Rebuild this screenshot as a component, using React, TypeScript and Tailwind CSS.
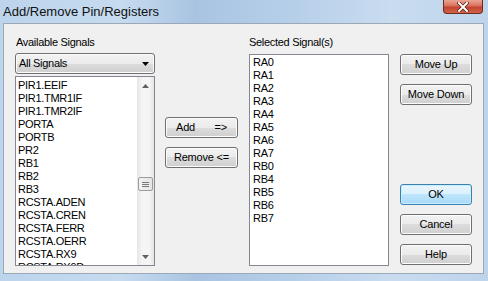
import React from "react";

const available = [
  "PIR1.EEIF",
  "PIR1.TMR1IF",
  "PIR1.TMR2IF",
  "PORTA",
  "PORTB",
  "PR2",
  "RB1",
  "RB2",
  "RB3",
  "RCSTA.ADEN",
  "RCSTA.CREN",
  "RCSTA.FERR",
  "RCSTA.OERR",
  "RCSTA.RX9",
  "RCSTA.RX9D",
];

const selected = ["RA0", "RA1", "RA2", "RA3", "RA4", "RA5", "RA6", "RA7", "RB0", "RB4", "RB5", "RB6", "RB7"];

const btn =
  "h-[21px] w-[72px] rounded-[3px] border border-[#707070] bg-[linear-gradient(#f2f2f2_0%,#ebebeb_50%,#dddddd_50%,#cfcfcf_100%)] shadow-[inset_0_0_0_1px_#fcfcfc] text-[11px] leading-[13px] tracking-[-0.2px] text-black flex items-center justify-center";

const WinButton = ({ label, primary }: { label: string; primary?: boolean }) => (
  <button
    className={
      primary
        ? "h-[21px] w-[72px] rounded-[3px] border border-[#3c7fb1] bg-[linear-gradient(#eaf6fd_0%,#d9f0fc_50%,#bee6fd_50%,#a7d9f5_100%)] shadow-[inset_0_0_0_1px_#c5f0ff] text-[11px] leading-[13px] text-black flex items-center justify-center"
        : btn
    }
  >
    {label}
  </button>
);

const ScrollBar = () => (
  <div className="w-[17px] h-full flex flex-col bg-[linear-gradient(90deg,#e6e6e6,#f5f5f5_30%,#f5f5f5_70%,#e6e6e6)]">
    <div className="h-[17px] flex items-center justify-center">
      <svg width="7" height="4" viewBox="0 0 7 4">
        <path d="M0 4 L3.5 0 L7 4 Z" fill="#606060" />
      </svg>
    </div>
    <div className="flex-1 flex flex-col">
      <div className="h-[83px]" />
      <div className="mx-[1px] h-[14px] rounded-[2px] border border-[#9b9b9b] bg-[linear-gradient(90deg,#f3f3f3,#e4e4e4)] flex flex-col items-center justify-center gap-[1px]">
        <div className="w-[7px] h-[1px] bg-[#7a7a7a]" />
        <div className="w-[7px] h-[1px] bg-[#7a7a7a]" />
        <div className="w-[7px] h-[1px] bg-[#7a7a7a]" />
      </div>
    </div>
    <div className="h-[17px] flex items-center justify-center">
      <svg width="7" height="4" viewBox="0 0 7 4">
        <path d="M0 0 L3.5 4 L7 0 Z" fill="#606060" />
      </svg>
    </div>
  </div>
);

export default function App() {
  return (
    <div
      className="w-[488px] h-[281px] flex flex-col bg-[linear-gradient(90deg,#bcd4ec_0%,#c6dbef_25%,#a9c4e2_40%,#b6cfe9_60%,#c9dcf0_80%,#bed4eb_100%)] overflow-hidden"
      style={{ fontFamily: '"Liberation Sans", Arial, sans-serif' }}
    >
      {/* title bar */}
      <div className="h-[23px] flex items-start justify-between pl-[3px] pr-[5px]">
        <span className="mt-[4px] text-[13px] leading-[15px] text-[#111]">Add/Remove Pin/Registers</span>
        <div className="w-[40px] h-[14px] rounded-b-[4px] border border-t-0 border-[#6e2b20] bg-[linear-gradient(#e9a493_0%,#d7715d_45%,#c4432f_55%,#d0644a_100%)] flex items-center justify-center">
          <svg width="12" height="10" viewBox="0 0 12 10">
            <path d="M2 1 L10 9 M10 1 L2 9" stroke="#5a2018" strokeWidth="3.4" strokeLinecap="square" />
            <path d="M2 1 L10 9 M10 1 L2 9" stroke="#ffffff" strokeWidth="2" strokeLinecap="square" />
          </svg>
        </div>
      </div>

      {/* client */}
      <div className="flex-1 flex pl-[3px] pr-[4px] pb-[7px]">
        <div className="flex-1 border border-[#9aa8b8] bg-[#f0f0f0] flex pl-[11px] pr-[11px] pt-[12px] pb-[7px] tracking-[-0.3px]">
          {/* available */}
          <div className="w-[140px] flex flex-col">
            <div className="text-[11px] leading-[13px] text-black pl-[1px]">Available Signals</div>
            <div className="mt-[4px] h-[21px] rounded-[3px] border border-[#707070] bg-[linear-gradient(#f2f2f2_0%,#ebebeb_50%,#dddddd_50%,#cfcfcf_100%)] shadow-[inset_0_0_0_1px_#fcfcfc] flex items-center justify-between pl-[3px] pr-[5px]">
              <span className="text-[11px] leading-[13px] text-black">All Signals</span>
              <svg width="7" height="4" viewBox="0 0 7 4">
                <path d="M0 0 L3.5 4 L7 0 Z" fill="#000" />
              </svg>
            </div>
            <div className="mt-[2px] h-[190px] border border-[#828790] bg-white flex overflow-hidden">
              <div className="flex-1 pl-[2px] pt-[2px] overflow-hidden">
                {available.map((s) => (
                  <div key={s} className="text-[11px] leading-[13px] text-black whitespace-nowrap">
                    {s}
                  </div>
                ))}
              </div>
              <ScrollBar />
            </div>
          </div>

          {/* add / remove */}
          <div className="ml-[10px] w-[73px] flex flex-col pt-[81px] gap-[9px]">
            <button className={btn + " !w-[73px] !justify-between px-[10px]"}>
              <span>Add</span>
              <span>=&gt;</span>
            </button>
            <button className={btn + " !w-[73px]"}>Remove &lt;=</button>
          </div>

          {/* selected */}
          <div className="ml-[11px] w-[140px] flex flex-col">
            <div className="text-[11px] leading-[13px] text-black">Selected Signal(s)</div>
            <div className="mt-[5px] h-[212px] border border-[#828790] bg-white pl-[3px] pt-[1px]">
              {selected.map((s) => (
                <div key={s} className="text-[11px] leading-[13px] text-black">
                  {s}
                </div>
              ))}
            </div>
          </div>

          {/* side buttons */}
          <div className="ml-[11px] w-[72px] flex flex-col pt-[18px]">
            <WinButton label="Move Up" />
            <div className="mt-[9px]">
              <WinButton label="Move Down" />
            </div>
            <div className="mt-[79px]">
              <WinButton label="OK" primary />
            </div>
            <div className="mt-[9px]">
              <WinButton label="Cancel" />
            </div>
            <div className="mt-[9px]">
              <WinButton label="Help" />
            </div>
          </div>
        </div>
      </div>
    </div>
  );
}
